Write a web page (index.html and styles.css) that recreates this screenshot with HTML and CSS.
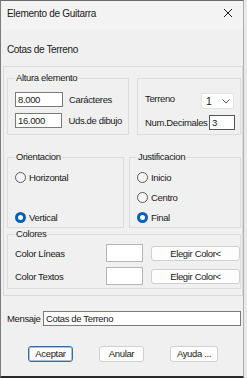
FILE: index.html
```html
<!DOCTYPE html>
<html>
<head>
<meta charset="utf-8">
<link rel="stylesheet" href="styles.css">
</head>
<body>
<div class="window">
  <div class="titlebar">
    <span class="title">Elemento de Guitarra</span>
    <svg class="close" width="10" height="10" viewBox="0 0 10 10"><path d="M1 1 L9 9 M9 1 L1 9" stroke="#1a1a1a" stroke-width="1" fill="none"/></svg>
  </div>
  <div class="content">
    <div class="heading">Cotas de Terreno</div>
    <div class="panel">
      <div class="row row1">
        <fieldset class="group g-altura">
          <legend>Altura elemento</legend>
          <div class="field-row"><div class="textbox w48">8.000</div><span class="lbl">Carácteres</span></div>
          <div class="field-row second"><div class="textbox w48">16.000</div><span class="lbl">Uds.de dibujo</span></div>
        </fieldset>
        <div class="group g-terreno">
          <div class="t-row">
            <span class="lbl terr">Terreno</span>
            <div class="combo"><span>1</span><svg width="8" height="5" viewBox="0 0 8 5"><path d="M0.5 0.5 L4 4 L7.5 0.5" stroke="#555" stroke-width="1" fill="none"/></svg></div>
          </div>
          <div class="t-row second">
            <span class="lbl">Num.Decimales</span>
            <div class="textbox dec">3</div>
          </div>
        </div>
      </div>
      <div class="row row2">
        <fieldset class="group g-orient">
          <legend>Orientacion</legend>
          <div class="radios">
            <label class="radio"><span class="dot"></span>Horizontal</label>
            <span></span>
            <label class="radio"><span class="dot on"></span>Vertical</label>
          </div>
        </fieldset>
        <fieldset class="group g-just">
          <legend>Justificacion</legend>
          <div class="radios">
            <label class="radio"><span class="dot"></span>Inicio</label>
            <label class="radio"><span class="dot"></span>Centro</label>
            <label class="radio"><span class="dot on"></span>Final</label>
          </div>
        </fieldset>
      </div>
      <fieldset class="group g-colores">
        <legend>Colores</legend>
        <div class="c-grid">
          <span class="lbl">Color Líneas</span>
          <div class="swatch"></div>
          <div class="btn wide">Elegir Color&lt;</div>
          <span class="lbl">Color Textos</span>
          <div class="swatch"></div>
          <div class="btn wide">Elegir Color&lt;</div>
        </div>
      </fieldset>
    </div>
    <div class="msg-row">
      <span class="lbl msg-lbl">Mensaje</span>
      <div class="textbox msg">Cotas de Terreno</div>
    </div>
    <div class="buttons">
      <div class="btn default b45">Aceptar</div>
      <div class="btn b45">Anular</div>
      <div class="btn b48">Ayuda ...</div>
    </div>
  </div>
</div>
</body>
</html>
```
FILE: styles.css
```css
html, body {
  margin: 0;
  padding: 0;
}
body {
  background: #e9e9e9;
  width: 247px;
  height: 378px;
  overflow: hidden;
  font-family: "Segoe UI", "Liberation Sans", Arial, sans-serif;
  font-size: 9.5px;
  letter-spacing: -0.35px;
  color: #1a1a1a;
}
.window {
  box-sizing: border-box;
  width: 244px;
  height: 378px;
  border-left: 1px solid #7c7c7c;
  border-right: 1px solid #b0b0b0;
  border-top: 1px solid #6a6a6a;
  border-bottom: 2px solid #2a2a2a;
  background: #f0f0f0;
  display: flex;
  flex-direction: column;
}
.titlebar {
  height: 29px;
  background: #f3f3f3;
  display: flex;
  align-items: center;
  justify-content: space-between;
  padding: 0 6px 4px 6px;
  box-sizing: border-box;
}
.title {
  font-size: 10px;
  letter-spacing: -0.3px;
  line-height: 14px;
}
.close {
  margin-right: 4px;
  margin-top: -2px;
}
.content {
  flex: 1;
  display: flex;
  flex-direction: column;
}
.heading {
  margin: 13px 0 0 6px;
  line-height: 14px;
  font-size: 10px;
}
.lbl {
  white-space: nowrap;
}
.panel {
  margin: 9px 0 0 2px;
  width: 240px;
  box-sizing: border-box;
  border: 1px solid #dadada;
  padding: 5px 1px 6px 3px;
}
.row {
  display: flex;
}
.row1 {
  gap: 8px;
}
.row2 {
  gap: 5px;
  margin-top: 16px;
}
fieldset.group {
  margin: 0;
  min-width: 0;
  border: 1px solid #dcdcdc;
}
.group {
  box-sizing: border-box;
  border: 1px solid #dcdcdc;
}
legend {
  padding: 0 1px;
  line-height: 12px;
  height: 12px;
}
.g-altura {
  width: 122px;
  padding: 8px 6px 6px 7px;
}
.field-row {
  display: flex;
  align-items: center;
  gap: 6px;
}
.field-row.second {
  margin-top: 6px;
}
.textbox {
  box-sizing: border-box;
  height: 15px;
  line-height: 13px;
  background: #fff;
  border: 1px solid #7a7a7a;
  padding: 0 2px;
  white-space: nowrap;
}
.w48 {
  width: 48px;
}
.g-terreno {
  flex: 1;
  margin-top: 6px;
  padding: 14px 6px 4px 7px;
}
.t-row {
  display: flex;
  justify-content: space-between;
  align-items: center;
}
.t-row.second {
  margin-top: 6px;
}
.terr {
  margin-top: -6px;
}
.combo {
  box-sizing: border-box;
  width: 33px;
  height: 16px;
  background: #fff;
  border: 1px solid #e2e2e2;
  border-radius: 2px;
  display: flex;
  align-items: center;
  justify-content: space-between;
  padding: 0 3px 0 4px;
  font-size: 10.5px;
}
.dec {
  width: 26px;
  margin-right: -1px;
  border-color: #555;
}
.g-orient {
  width: 117px;
  padding: 5px 6px 1px 7px;
}
.g-just {
  flex: 1;
  padding: 5px 6px 1px 7px;
}
.radios {
  display: grid;
  grid-template-rows: 18px 18px 18px;
  row-gap: 2px;
}
.radio {
  display: flex;
  align-items: center;
  gap: 3px;
}
.dot {
  box-sizing: border-box;
  width: 11px;
  height: 11px;
  border-radius: 50%;
  border: 1px solid #5a5a5a;
  background: #f5f5f5;
}
.dot.on {
  border: 3.5px solid #0a5fb4;
  background: #fff;
}
.g-colores {
  margin-top: 10px;
  width: 234px;
  padding: 4px 8px 3px 7px;
}
.c-grid {
  display: grid;
  grid-template-columns: 83px 37px 89px;
  grid-template-rows: 18px 18px;
  column-gap: 8px;
  row-gap: 5px;
  align-items: center;
}
.swatch {
  box-sizing: border-box;
  height: 18px;
  background: #fff;
  border: 1px solid #b5b5b5;
}
.btn {
  box-sizing: border-box;
  height: 16px;
  line-height: 14px;
  text-align: center;
  background: #fdfdfd;
  border: 1px solid #d0d0d0;
  border-radius: 3px;
  white-space: nowrap;
}
.wide {
  height: 15px;
  line-height: 13px;
}
.msg-row {
  display: flex;
  align-items: center;
  margin: 15px 0 0 6px;
  gap: 6px;
}
.msg-lbl {
  width: 30px;
}
.msg {
  width: 198px;
}
.buttons {
  display: flex;
  gap: 26px;
  margin: 20px 0 0 27px;
}
.b45 {
  width: 45px;
}
.b48 {
  width: 48px;
}
.btn.default {
  border: 1px solid #3b6aa3;
  box-shadow: inset 0 0 0 1px #a9c0dc;
}
```
